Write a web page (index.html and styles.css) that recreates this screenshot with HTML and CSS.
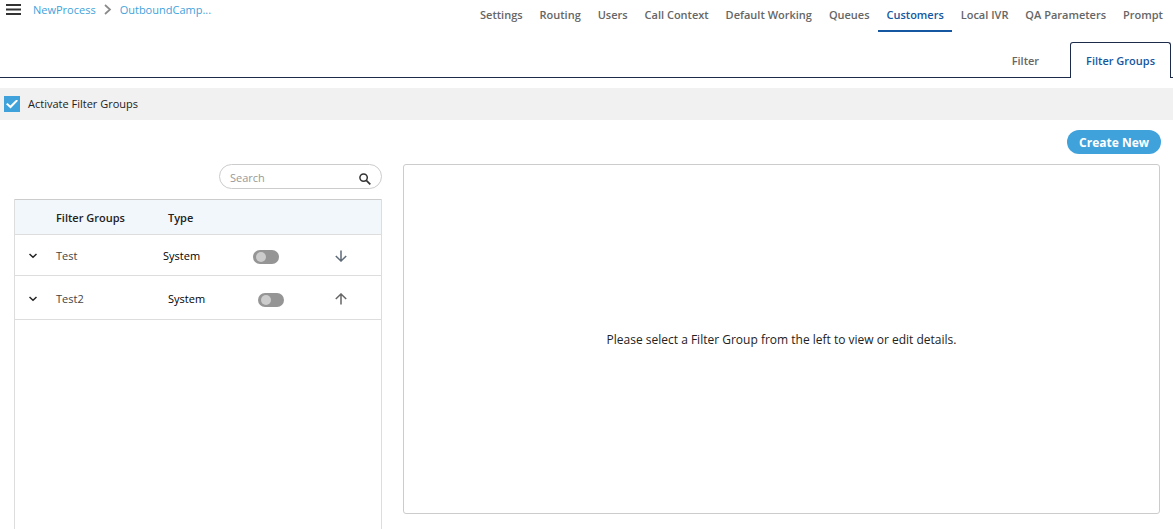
FILE: index.html
```html
<!DOCTYPE html>
<html lang="en">
<head>
<meta charset="utf-8">
<meta name="viewport" content="width=device-width, initial-scale=1">
<title>Filter Groups</title>
<link rel="stylesheet" href="styles.css">
</head>
<body>
<div class="page">
  <header class="topbar">
    <button class="menu" type="button" aria-label="Menu">
      <svg width="15" height="12" viewBox="0 0 15 12"><path d="M0 1h15M0 5.500h15M0 10h15" stroke="#333" stroke-width="2"/></svg>
    </button>
    <nav class="crumbs" aria-label="Breadcrumb">
      <a href="#">NewProcess</a>
      <svg width="8" height="12" viewBox="0 0 8 12"><path d="M1 1l5 4.500-5 4.500" fill="none" stroke="#8a8a8a" stroke-width="1.700"/></svg>
      <a href="#">OutboundCamp...</a>
    </nav>
    <nav class="sections" aria-label="Sections">
      <a href="#">Settings</a>
      <a href="#">Routing</a>
      <a href="#">Users</a>
      <a href="#">Call Context</a>
      <a href="#">Default Working</a>
      <a href="#">Queues</a>
      <a href="#" class="current" aria-current="page">Customers</a>
      <a href="#">Local IVR</a>
      <a href="#">QA Parameters</a>
      <a href="#">Prompt</a>
    </nav>
  </header>

  <nav class="tabs" aria-label="Customer tabs">
    <a href="#" class="tab">Filter</a>
    <a href="#" class="tab active" aria-current="page">Filter Groups</a>
  </nav>

  <div class="activate">
    <input type="checkbox" id="activate" class="check" checked>
    <label for="activate">Activate Filter Groups</label>
  </div>

  <div class="actions">
    <button class="create" type="button">Create New</button>
  </div>

  <main class="content">
    <section class="groups">
      <form class="search" role="search">
        <input type="text" class="search-input" placeholder="Search" aria-label="Search">
        <button type="button" class="search-button" aria-label="Run search">
          <svg width="12" height="12" viewBox="0 0 12 12"><circle cx="4.600" cy="4.600" r="3.700" fill="none" stroke="#333" stroke-width="1.500"/><path d="M7.300 7.300l4 4" stroke="#333" stroke-width="1.700"/></svg>
        </button>
      </form>
      <div class="table-box">
        <table class="table">
          <colgroup><col class="col-expand"><col class="col-name"><col class="col-type"><col class="col-state"><col></colgroup>
          <thead>
            <tr><th></th><th>Filter Groups</th><th class="inset">Type</th><th></th><th></th></tr>
          </thead>
          <tbody>
            <tr class="row-first">
              <td class="expand"><button type="button" class="icon" aria-label="Expand Test"><svg width="8" height="6" viewBox="0 0 8 6"><path d="M.5 1L4 4.300 7.500 1" fill="none" stroke="#222" stroke-width="1.500"/></svg></button></td>
              <td class="name">Test</td>
              <td>System</td>
              <td><input type="checkbox" class="toggle" aria-label="Enable Test"></td>
              <td class="move"><button type="button" class="icon" aria-label="Move Test down"><svg width="12" height="12" viewBox="0 0 12 12"><path d="M6 .5v10.300M.8 6L6 11l5.200-5" fill="none" stroke="#5f6b78" stroke-width="1.500"/></svg></button></td>
            </tr>
            <tr class="row-second">
              <td class="expand"><button type="button" class="icon" aria-label="Expand Test2"><svg width="8" height="6" viewBox="0 0 8 6"><path d="M.5 1L4 4.300 7.500 1" fill="none" stroke="#222" stroke-width="1.500"/></svg></button></td>
              <td class="name">Test2</td>
              <td class="inset">System</td>
              <td class="inset"><input type="checkbox" class="toggle" aria-label="Enable Test2"></td>
              <td class="move"><button type="button" class="icon" aria-label="Move Test2 up"><svg width="12" height="12" viewBox="0 0 12 12"><path d="M6 11.500V1.200M.8 6L6 1l5.200 5" fill="none" stroke="#666" stroke-width="1.500"/></svg></button></td>
            </tr>
          </tbody>
        </table>
      </div>
    </section>
    <section class="details">
      <p>Please select a Filter Group from the left to view or edit details.</p>
    </section>
  </main>
</div>
</body>
</html>
```
FILE: styles.css
```css
* { box-sizing: border-box; }
body {
  margin: 0;
  background: #fff;
  color: #222;
  font: 11px/16px "Segoe UI", "Open Sans", "Noto Sans", sans-serif;
}
a { text-decoration: none; }
svg { display: block; }
button, input { font: inherit; }
.page {
  display: flex;
  flex-direction: column;
  min-height: 100vh;
}
.menu, .icon, .search-button {
  padding: 0;
  border: 0;
  background: none;
  cursor: pointer;
}
.topbar {
  display: flex;
  align-items: flex-start;
  height: 32px;
  padding: 0 2px 0 6px;
}
.menu { margin: 4px 12px 0 0; }
.crumbs {
  display: flex;
  align-items: center;
  gap: 8px;
  padding-top: 2px;
}
.crumbs a { color: #3fa2db; }
.sections {
  display: flex;
  justify-content: space-between;
  flex: 0 0 60%;
  margin-left: auto;
}
.sections a {
  height: 32px;
  padding: 7px 8px 0;
  border-bottom: 2px solid transparent;
  color: #666;
  font-weight: 600;
  white-space: nowrap;
}
.sections .current {
  border-color: #1557a0;
  color: #1557a0;
}
.tabs {
  display: flex;
  justify-content: flex-end;
  height: 46px;
  padding: 10px 2px 0 0;
  border-bottom: 1px solid #1c2b4a;
}
.tab {
  height: 36px;
  padding: 10px 15px;
  border: 1px solid transparent;
  border-bottom: 0;
  border-radius: 3px 3px 0 0;
  color: #666;
  font-weight: 600;
}
.tab.active {
  margin-left: 15px;
  border-color: #1c2b4a;
  background: #fff;
  color: #1557a0;
}
.activate {
  display: flex;
  align-items: center;
  gap: 8px;
  margin-top: 10px;
  padding: 8px 4px;
  background: #f1f1f1;
}
.check {
  appearance: none;
  display: grid;
  place-items: center;
  width: 16px;
  height: 16px;
  margin: 0;
  background: #3fa2db;
}
.check:checked::before {
  content: "";
  width: 12px;
  height: 9px;
  background: #fff;
  clip-path: polygon(0 54%, 13% 40%, 36% 68%, 88% 0, 100% 14%, 38% 100%);
}
.actions {
  display: flex;
  justify-content: flex-end;
  padding: 10px 12px;
}
.create {
  height: 24px;
  padding: 2px 12px 0;
  border: 0;
  border-radius: 12px;
  background: #3fa2db;
  color: #fff;
  font-size: 12px;
  font-weight: 700;
}
.content {
  display: flex;
  flex: 1;
  gap: 21px;
  padding: 0 13px 0 14px;
}
.groups {
  display: flex;
  flex-direction: column;
  flex: 0 0 368px;
}
.search {
  display: flex;
  align-items: center;
  align-self: flex-end;
  width: 163px;
  height: 25px;
  margin-bottom: 10px;
  padding: 2px 10px 0;
  border: 1px solid #ccc;
  border-radius: 13px;
}
.search-input {
  flex: 1;
  min-width: 0;
  padding: 0;
  border: 0;
  outline: 0;
  background: none;
}
.search-input::placeholder { color: #999; }
.search-button { padding-top: 2px; }
.table-box {
  flex: 1;
  border: 1px solid #ddd;
  border-width: 0 1px;
}
.table {
  width: 100%;
  table-layout: fixed;
  border-collapse: collapse;
}
.col-expand { width: 41px; }
.col-name { width: 107px; }
.col-type { width: 90px; }
.col-state { width: 64px; }
th, td {
  padding: 0;
  border-bottom: 1px solid #ddd;
  text-align: left;
}
th {
  height: 35px;
  padding-top: 2px;
  border-top: 1px solid #ccc;
  background: #f2f7fb;
  font-weight: 600;
}
td { padding-top: 2px; }
.table .inset { padding-left: 5px; }
.row-first { height: 41px; }
.row-second { height: 44px; }
td { color: #000; }
td.name { color: #444; }
.expand .icon { margin: 0 14px; }
.move .icon { margin: 0 18px; }
.icon { display: block; }
.toggle {
  appearance: none;
  display: flex;
  align-items: center;
  width: 26px;
  height: 14px;
  margin: 2px 0 0;
  padding: 0 3px;
  border-radius: 7px;
  background: #959595;
}
.toggle::before {
  content: "";
  width: 10px;
  height: 10px;
  border-radius: 50%;
  background: #ccc;
}
.toggle:checked { justify-content: flex-end; }
.details {
  display: grid;
  place-items: center;
  flex: 1;
  margin-bottom: 15px;
  border: 1px solid #ccc;
  border-radius: 3px;
}
.details p {
  margin: 0;
  padding-top: 2px;
  font-size: 12px;
}
```
